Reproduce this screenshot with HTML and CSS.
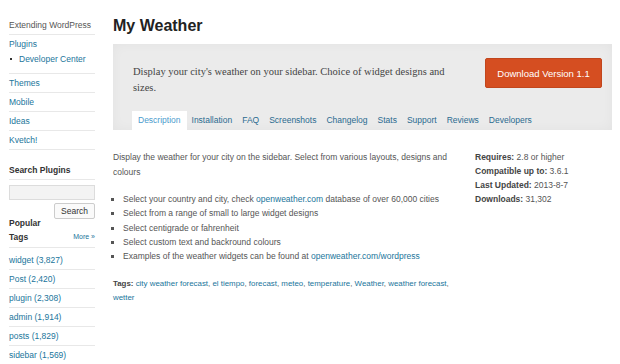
FILE: index.html
```html
<!DOCTYPE html>
<html lang="en">
<head>
  <meta charset="UTF-8" />
  <title>My Weather - WordPress Plugins</title>
  <link rel="stylesheet" href="styles.css">
</head>
<body>
  <div class="page">
    <div class="sidebar">
      <ul class="nav">
        <li class="plain">Extending WordPress</li>
        <li>
          <a href="#">Plugins</a>
          <ul class="sub">
            <li><a href="#">Developer Center</a></li>
          </ul>
        </li>
        <li><a href="#">Themes</a></li>
        <li><a href="#">Mobile</a></li>
        <li><a href="#">Ideas</a></li>
        <li><a href="#">Kvetch!</a></li>
      </ul>

      <h4 class="side-title">Search Plugins</h4>
      <form class="search">
        <input type="text" class="search-box" />
        <button type="button" class="search-btn">Search</button>
      </form>

      <div class="tags-head">
        <h4>Popular<br />Tags</h4>
        <a href="#" class="more">More »</a>
      </div>
      <ul class="tag-list">
        <li><a href="#">widget (3,827)</a></li>
        <li><a href="#">Post (2,420)</a></li>
        <li><a href="#">plugin (2,308)</a></li>
        <li><a href="#">admin (1,914)</a></li>
        <li><a href="#">posts (1,829)</a></li>
        <li><a href="#">sidebar (1,569)</a></li>
      </ul>
    </div>

    <div class="main">
      <h2>My Weather</h2>

      <div class="plugin-head">
        <div class="head-row">
          <p class="lead">Display your city's weather on your sidebar. Choice of widget designs and sizes.</p>
          <a href="#" class="download">Download Version 1.1</a>
        </div>
        <ul class="tabs">
          <li class="current"><a href="#">Description</a></li>
          <li><a href="#">Installation</a></li>
          <li><a href="#">FAQ</a></li>
          <li><a href="#">Screenshots</a></li>
          <li><a href="#">Changelog</a></li>
          <li><a href="#">Stats</a></li>
          <li><a href="#">Support</a></li>
          <li><a href="#">Reviews</a></li>
          <li><a href="#">Developers</a></li>
        </ul>
      </div>

      <div class="body-row">
        <div class="desc">
          <p>Display the weather for your city on the sidebar. Select from various layouts, designs and colours</p>
          <ul class="features">
            <li>Select your country and city, check <a href="#">openweather.com</a> database of over 60,000 cities</li>
            <li>Select from a range of small to large widget designs</li>
            <li>Select centigrade or fahrenheit</li>
            <li>Select custom text and backround colours</li>
            <li>Examples of the weather widgets can be found at <a href="#">openweather.com/wordpress</a></li>
          </ul>
          <p class="tags"><strong>Tags:</strong> <a href="#">city weather forecast</a>, <a href="#">el tiempo</a>, <a href="#">forecast</a>, <a href="#">meteo</a>, <a href="#">temperature</a>, <a href="#">Weather</a>, <a href="#">weather forecast</a>, <a href="#">wetter</a></p>
        </div>

        <ul class="meta">
          <li><strong>Requires:</strong> 2.8 or higher</li>
          <li><strong>Compatible up to:</strong> 3.6.1</li>
          <li><strong>Last Updated:</strong> 2013-8-7</li>
          <li><strong>Downloads:</strong> 31,302</li>
        </ul>
      </div>
    </div>
  </div>
</body>
</html>
```

FILE: styles.css
```css
body {
  margin: 0;
  font-family: "Liberation Sans", Arial, sans-serif;
  font-size: 8.5px;
  color: #555;
  background: #fff;
}
a {
  color: #21759b;
  text-decoration: none;
}
ul {
  margin: 0;
  padding: 0;
  list-style: none;
}
.page {
  display: flex;
  padding-right: 8px;
}

/* sidebar */
.sidebar {
  width: 86px;
  padding: 16px 0 0 9px;
  flex: none;
}
.nav > li,
.tag-list li {
  line-height: 12px;
  padding: 3px 0;
  border-bottom: 1px solid #e8e8e8;
}
.nav .plain {
  color: #555;
}
.sub {
  padding: 3px 0 5px 0;
}
.sub li {
  padding-left: 10px;
  position: relative;
}
.sub li::before {
  content: "";
  position: absolute;
  left: 1px;
  top: 5px;
  width: 2px;
  height: 2px;
  background: #333;
}
.side-title {
  margin: 14px 0 0;
  font-size: 8.5px;
  color: #333;
  line-height: 12px;
  padding-bottom: 3px;
  border-bottom: 1px solid #e8e8e8;
}
.search {
  display: flex;
  flex-direction: column;
  align-items: flex-end;
  margin: 5px 0 0;
}
.search-box {
  box-sizing: border-box;
  width: 86px;
  height: 15px;
  margin: 0;
  border: 1px solid #dcdcdc;
  background: #f3f3f3;
}
.search-btn {
  margin-top: 3px;
  height: 16px;
  padding: 0 6px;
  font-family: "Liberation Sans", Arial, sans-serif;
  font-size: 8.5px;
  color: #333;
  background: #fafafa;
  border: 1px solid #ccc;
  border-radius: 2px;
}
.tags-head {
  display: flex;
  justify-content: space-between;
  align-items: flex-end;
  margin-top: -3px;
  padding-bottom: 3px;
  border-bottom: 1px solid #e8e8e8;
}
.tags-head h4 {
  margin: 0;
  font-size: 8.5px;
  line-height: 14px;
  color: #333;
}
.more {
  font-size: 7px;
  line-height: 14px;
}
.tag-list li:first-child {
  padding-top: 6px;
}

/* main */
.main {
  flex: 1;
  margin-left: 18px;
}
h2 {
  margin: 15px 0 0;
  font-size: 16px;
  line-height: 22px;
  color: #222;
}
.plugin-head {
  margin-top: 7px;
  background: #ebebeb;
  box-shadow: inset 0 0 12px rgb(0 0 0 / 0.04);
  padding: 13px 10px 0 20px;
}
.head-row {
  display: flex;
  justify-content: space-between;
  align-items: flex-start;
}
.lead {
  margin: 7px 0 0;
  width: 330px;
  font-family: "Liberation Serif", Georgia, serif;
  font-size: 10.5px;
  line-height: 16px;
  color: #444;
}
.download {
  width: 117px;
  height: 30px;
  line-height: 30px;
  margin-top: 1px;
  text-align: center;
  font-size: 9.5px;
  color: #fff;
  background: #d54e21;
  border: 1px solid #c1461d;
  border-radius: 2px;
  box-sizing: border-box;
}
.tabs {
  display: flex;
  margin-top: 15px;
  margin-left: -1px;
}
.tabs li a {
  display: block;
  line-height: 19px;
  padding: 0 5px;
  color: #2a6a8f;
}
.tabs li.current a {
  background: #fff;
  color: #4b9ccd;
  padding: 0 6px;
}

.body-row {
  display: flex;
  justify-content: space-between;
  margin-top: 20px;
}
.desc {
  width: 345px;
}
.desc p {
  margin: 0;
  line-height: 15px;
}
.features {
  margin: 12px 0 14px;
  list-style: square;
  padding-left: 10px;
}
.features li {
  line-height: 14.3px;
}
.desc .tags {
  font-size: 7.9px;
  line-height: 14px;
}
.tags strong {
  color: #444;
}
.meta {
  width: 137px;
}
.meta li {
  line-height: 14px;
}
.meta strong {
  color: #444;
}
```
